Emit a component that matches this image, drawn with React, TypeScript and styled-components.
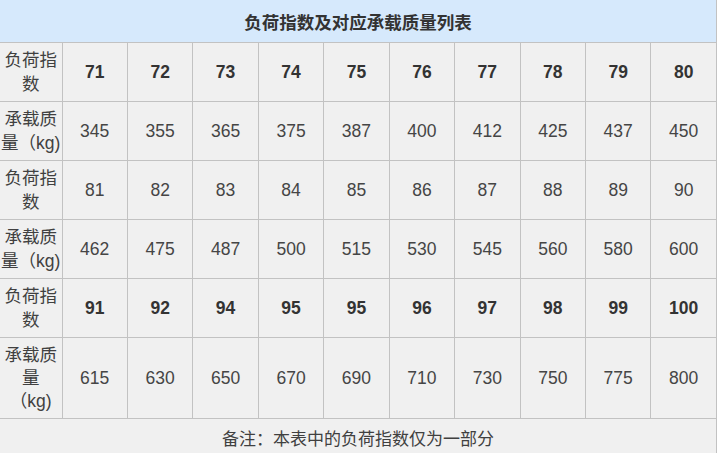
import React from 'react'
import styled, { createGlobalStyle } from 'styled-components'

const GlobalStyle = createGlobalStyle`
    body {
        margin: 0;
        background: #ffffff;
        font-family: "Liberation Sans", "Noto Sans CJK SC", sans-serif;
    }
`

type Row = {
    label: React.ReactNode
    values: number[]
    bold?: boolean
    tall?: boolean
}

const rows: Row[] = [
    { label: <>负荷指<br />数</>, values: [71, 72, 73, 74, 75, 76, 77, 78, 79, 80], bold: true },
    { label: <>承载质<br />量（kg)</>, values: [345, 355, 365, 375, 387, 400, 412, 425, 437, 450] },
    { label: <>负荷指<br />数</>, values: [81, 82, 83, 84, 85, 86, 87, 88, 89, 90] },
    { label: <>承载质<br />量（kg)</>, values: [462, 475, 487, 500, 515, 530, 545, 560, 580, 600] },
    { label: <>负荷指<br />数</>, values: [91, 92, 94, 95, 95, 96, 97, 98, 99, 100], bold: true },
    { label: <>承载质<br />量<br />（kg)</>, values: [615, 630, 650, 670, 690, 710, 730, 750, 775, 800], tall: true },
]

const App: React.FC = () => {
    return (
        <>
            <GlobalStyle />
            <Table>
                <colgroup>
                    <col style={{ width: 62 }} />
                    {Array.from({ length: 10 }).map((_, i) => (
                        <col key={i} />
                    ))}
                </colgroup>
                <tbody>
                    <tr>
                        <TitleCell colSpan={11}>负荷指数及对应承载质量列表</TitleCell>
                    </tr>
                    {rows.map((row, i) => (
                        <tr key={i}>
                            <LabelCell $tall={row.tall}>{row.label}</LabelCell>
                            {row.values.map((v, j) => (
                                <ValueCell key={j} $bold={row.bold} $tall={row.tall}>
                                    {v}
                                </ValueCell>
                            ))}
                        </tr>
                    ))}
                    <tr>
                        <NoteCell colSpan={11}>备注：本表中的负荷指数仅为一部分</NoteCell>
                    </tr>
                </tbody>
            </Table>
        </>
    )
}

export default App

const Table = styled.table`
    width: 717px;
    table-layout: fixed;
    border-collapse: collapse;
    background: #f0f0f0;
    color: #3a3a3a;
`

const Cell = styled.td`
    border: 1px solid #c2c2c2;
    padding: 0;
    text-align: center;
    vertical-align: middle;

    &:first-child {
        border-left: none;
    }
`

const TitleCell = styled(Cell)`
    height: 42px;
    border-top: none;
    background: #d6e9fc;
    font-size: 17.5px;
    font-weight: bold;
    color: #333333;
`

const LabelCell = styled(Cell)<{ $tall?: boolean }>`
    height: ${({ $tall }) => ($tall ? '80px' : '58px')};
    font-size: 17.5px;
    line-height: ${({ $tall }) => ($tall ? '23px' : '24px')};
    color: #404040;
`

const ValueCell = styled(Cell)<{ $bold?: boolean; $tall?: boolean }>`
    height: ${({ $tall }) => ($tall ? '80px' : '58px')};
    font-size: 17.5px;
    font-weight: ${({ $bold }) => ($bold ? 'bold' : 'normal')};
    color: ${({ $bold }) => ($bold ? '#333333' : '#454545')};
`

const NoteCell = styled(Cell)`
    height: 36px;
    border-bottom: none;
    font-size: 17px;
    color: #404040;
`
